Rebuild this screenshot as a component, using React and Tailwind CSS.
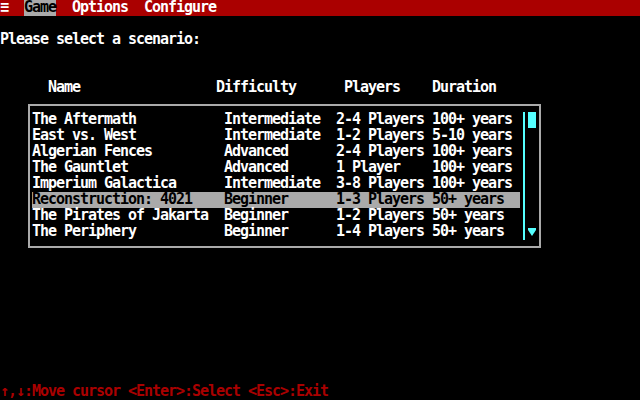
import React from "react";

const rows = [
  ["The Aftermath", "Intermediate", "2-4 Players", "100+ years"],
  ["East vs. West", "Intermediate", "1-2 Players", "5-10 years"],
  ["Algerian Fences", "Advanced", "2-4 Players", "100+ years"],
  ["The Gauntlet", "Advanced", "1 Player", "100+ years"],
  ["Imperium Galactica", "Intermediate", "3-8 Players", "100+ years"],
  ["Reconstruction: 4021", "Beginner", "1-3 Players", "50+ years"],
  ["The Pirates of Jakarta", "Beginner", "1-2 Players", "50+ years"],
  ["The Periphery", "Beginner", "1-4 Players", "50+ years"],
];

export default function App() {
  return (
    <div className="w-[640px] h-[400px] bg-black flex flex-col font-['DejaVu_Sans_Mono',monospace] text-[15px] font-bold tracking-[-1.03px] text-white leading-[14px] whitespace-pre overflow-hidden">
      {/* menu bar */}
      <div className="h-4 bg-[#aa0000] flex">
        <span className="w-[24px]">≡</span>
        <span className="w-[32px] h-4 bg-[#aaaaaa] text-black">Game</span>
        <span className="w-[16px]" />
        <span className="w-[72px]">Options</span>
        <span>Configure</span>
      </div>
      <div className="h-4" />
      <div className="h-4">Please select a scenario:</div>
      <div className="h-8" />
      <div className="h-4 flex pl-[48px]">
        <span className="w-[168px]">Name</span>
        <span className="w-[128px]">Difficulty</span>
        <span className="w-[88px]">Players</span>
        <span>Duration</span>
      </div>
      <div className="mt-2 ml-[28px] w-[513px] border-2 border-[#aaaaaa] pt-[6px] pb-[6px] pl-[2px] flex">
        <div className="w-[488px] flex flex-col">
          {rows.map((r, i) => (
            <div
              key={i}
              className={
                "h-4 flex " + (i === 5 ? "bg-[#aaaaaa] text-black" : "")
              }
            >
              <span className="w-[192px]">{r[0]}</span>
              <span className="w-[112px]">{r[1]}</span>
              <span className="w-[96px]">{r[2]}</span>
              <span>{r[3]}</span>
            </div>
          ))}
        </div>
        <div className="w-[3px]" />
        <div className="w-[2px] h-[128px] bg-[#55ffff]" />
        <div className="w-[3px]" />
        <div className="w-[8px] h-[128px] flex flex-col justify-between">
          <div className="w-[8px] h-4 bg-[#55ffff]" />
          <svg width="8" height="16" viewBox="0 0 8 16" className="block">
            <polygon points="0,4 8,4 8,6 4,12 0,6" fill="#55ffff" />
          </svg>
        </div>
      </div>
      <div className="mt-auto h-4 text-[#aa0000]">↑,↓:Move cursor &lt;Enter&gt;:Select &lt;Esc&gt;:Exit</div>
    </div>
  );
}
